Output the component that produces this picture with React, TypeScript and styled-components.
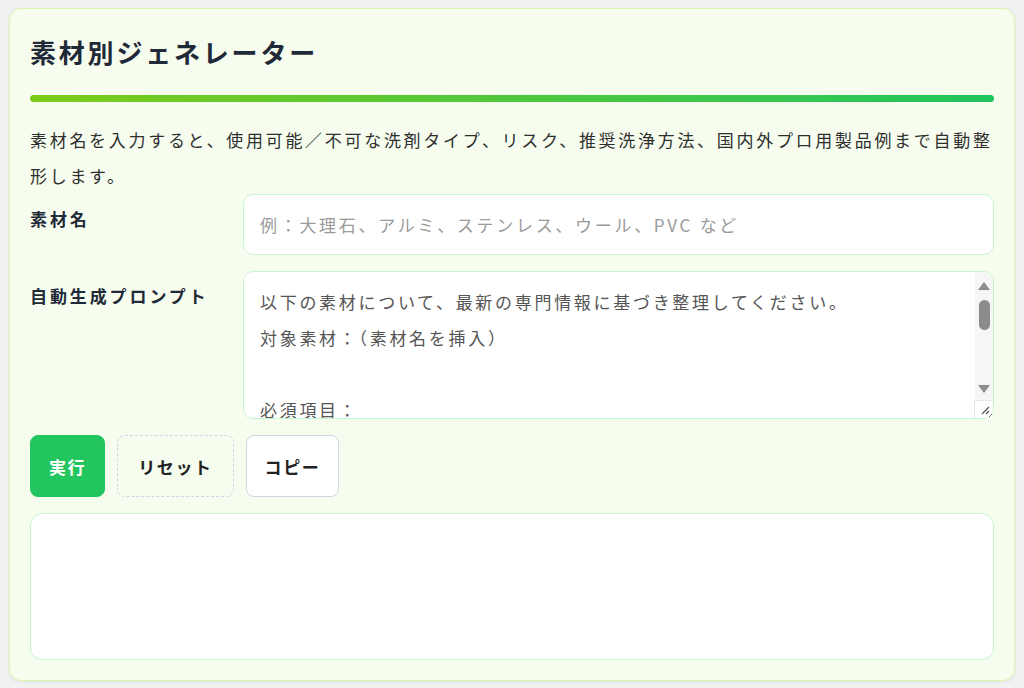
import React, { useState } from "react";
import styled, { createGlobalStyle } from "styled-components";

const GlobalStyle = createGlobalStyle`
  html, body {
    margin: 0;
    padding: 0;
    background: #f0f1f0;
    font-family: "Noto Sans CJK JP", "Noto Sans", sans-serif;
  }
  * { box-sizing: border-box; }
`;

const Page = styled.div`
  padding: 8px 9px 7px 9px;
`;

const Card = styled.section`
  background: #f6fdee;
  border: 1px solid #d9f7a8;
  border-radius: 12px;
  box-shadow: 0 1px 4px rgba(0, 0, 0, 0.06);
  padding: 20px;
  display: flex;
  flex-direction: column;
`;

const Title = styled.h1`
  margin: 0;
  height: 46px;
  padding-top: 4px;
  font-size: 26px;
  line-height: 38px;
  letter-spacing: 2.8px;
  font-weight: 700;
  color: #1f2937;
`;

const Bar = styled.div`
  margin-top: 20px;
  height: 7px;
  border-radius: 4px;
  background: linear-gradient(90deg, #7ccb1a, #22c55e);
`;

const Description = styled.p`
  margin: 20px 0 0;
  font-size: 17px;
  line-height: 36px;
  letter-spacing: 2.7px;
  color: #2f2f2f;
`;

const Form = styled.div`
  display: grid;
  grid-template-columns: 201px 1fr;
  column-gap: 12px;
  row-gap: 16px;
`;

const Label = styled.label`
  padding-top: 12px;
  font-size: 17px;
  line-height: 26px;
  letter-spacing: 2.9px;
  font-weight: 700;
  color: #1f2937;
`;

const TextInput = styled.input`
  height: 61px;
  padding: 0 16px;
  border: 1px solid #c6f5d2;
  border-radius: 10px;
  background: #fff;
  font-family: inherit;
  font-size: 17px;
  letter-spacing: 2.7px;
  color: #333;
  outline: none;
  &::placeholder { color: #9a9a9a; }
`;

const AreaWrap = styled.div`
  position: relative;
  display: flex;
`;

const PromptArea = styled.textarea`
  flex: 1;
  height: 148px;
  padding: 12px 20px 12px 16px;
  border: 1px solid #c6f5d2;
  border-radius: 10px;
  background: #fff;
  font-family: inherit;
  font-size: 17px;
  line-height: 36px;
  letter-spacing: 2.7px;
  color: #555;
  outline: none;
  resize: vertical;
  scrollbar-width: none;
`;

/* classic scrollbar look drawn over the textarea edge */
const ScrollTrack = styled.div`
  position: absolute;
  top: 1px;
  right: 1px;
  bottom: 18px;
  width: 18px;
  background: #f6f6f6;
  border-top-right-radius: 9px;
  pointer-events: none;
  display: flex;
  flex-direction: column;
  align-items: center;
  padding: 10px 0 8px;
`;

const Arrow = styled.div<{ $dir: "up" | "down" }>`
  width: 0;
  height: 0;
  border-left: 6px solid transparent;
  border-right: 6px solid transparent;
  ${(p) =>
    p.$dir === "up"
      ? "border-bottom: 8px solid #8c8c8c;"
      : "border-top: 8px solid #8c8c8c; margin-top: auto;"}
`;

const Thumb = styled.div`
  margin-top: 10px;
  width: 11px;
  height: 30px;
  border-radius: 6px;
  background: #8c8c8c;
`;

const Corner = styled.div`
  position: absolute;
  right: 1px;
  bottom: 1px;
  width: 19px;
  height: 18px;
  background: #fff;
  border-top: 1px solid #e6e6e6;
  border-left: 1px solid #e6e6e6;
  border-bottom-right-radius: 9px;
  pointer-events: none;
  display: flex;
  align-items: flex-end;
  justify-content: flex-end;
  padding: 0 3px 3px 0;
`;

const Actions = styled.div`
  display: flex;
  gap: 12px;
  margin-top: 16px;
`;

const Button = styled.button<{ $variant: "primary" | "dashed" | "plain" }>`
  height: 62px;
  padding: 0 ${(p) => (p.$variant === "dashed" ? 20 : 18)}px;
  border-radius: 8px;
  font-family: inherit;
  font-size: 17px;
  letter-spacing: 1.6px;
  font-weight: 700;
  cursor: pointer;
  color: ${(p) => (p.$variant === "primary" ? "#fff" : "#222")};
  background: ${(p) =>
    p.$variant === "primary" ? "#22c55e" : p.$variant === "plain" ? "#fff" : "transparent"};
  border: 1px ${(p) => (p.$variant === "dashed" ? "dashed" : "solid")}
    ${(p) => (p.$variant === "primary" ? "#22c55e" : "#cdd6e3")};
`;

const Output = styled.div`
  margin-top: 16px;
  height: 147px;
  background: #fff;
  border: 1px solid #c6f5d2;
  border-radius: 12px;
`;

const PROMPT = `以下の素材について、最新の専門情報に基づき整理してください。
対象素材：（素材名を挿入）

必須項目：
1. 使用可能な洗剤タイプ（中性・弱アルカリ・酸性など）
2. 使用不可な洗剤タイプとその理由
3. 想定されるリスク（変色・腐食・傷など）
4. 推奨される洗浄方法と手順
5. 国内のプロ用製品例
6. 海外のプロ用製品例

出力形式：
見出しと箇条書きで簡潔にまとめてください。`;

export default function App() {
  const [material, setMaterial] = useState("");
  const [prompt, setPrompt] = useState(PROMPT);

  return (
    <>
      <GlobalStyle />
      <Page>
        <Card>
          <Title>素材別ジェネレーター</Title>
          <Bar />
          <Description>
            素材名を入力すると、使用可能／不可な洗剤タイプ、リスク、推奨洗浄方法、国内外プロ用製品例まで自動整形します。
          </Description>
          <Form>
            <Label htmlFor="material">素材名</Label>
            <TextInput
              id="material"
              value={material}
              onChange={(e) => setMaterial(e.target.value)}
              placeholder="例：大理石、アルミ、ステンレス、ウール、PVC など"
            />
            <Label htmlFor="prompt">自動生成プロンプト</Label>
            <AreaWrap>
              <PromptArea
                id="prompt"
                value={prompt}
                onChange={(e) => setPrompt(e.target.value)}
              />
              <ScrollTrack aria-hidden>
                <Arrow $dir="up" />
                <Thumb />
                <Arrow $dir="down" />
              </ScrollTrack>
              <Corner aria-hidden>
                <svg width="9" height="9" viewBox="0 0 9 9">
                  <path d="M1 8 L8 1 M5 8 L8 5" stroke="#555" strokeWidth="1.2" />
                </svg>
              </Corner>
            </AreaWrap>
          </Form>
          <Actions>
            <Button $variant="primary">実行</Button>
            <Button
              $variant="dashed"
              onClick={() => {
                setMaterial("");
                setPrompt(PROMPT);
              }}
            >
              リセット
            </Button>
            <Button $variant="plain">コピー</Button>
          </Actions>
          <Output />
        </Card>
      </Page>
    </>
  );
}
